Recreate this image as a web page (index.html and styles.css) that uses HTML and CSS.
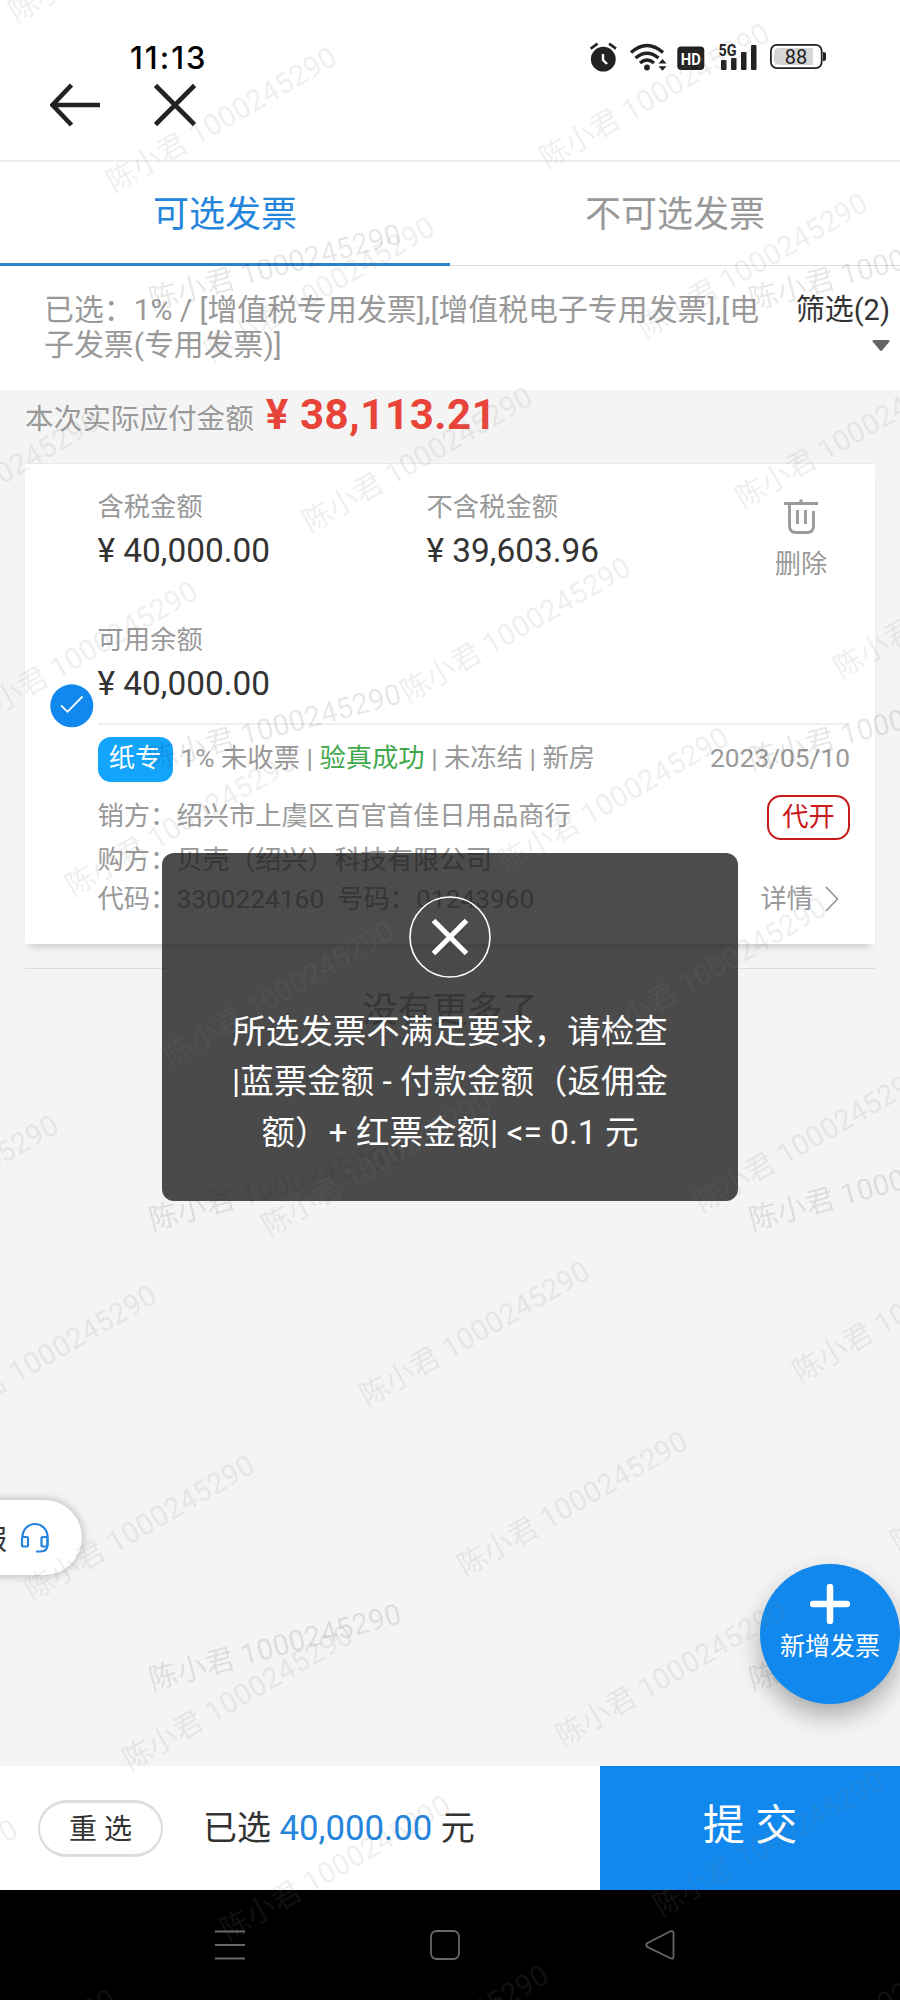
FILE: index.html
```html
<!DOCTYPE html>
<html lang="zh-CN">
<head>
<meta charset="utf-8">
<title>选择发票</title>
<link rel="stylesheet" href="styles.css">
</head>
<body>
<div class="screen">
  <header class="status">
    <span class="clock">11:13</span>
    <svg class="status-icons" width="240" height="40" viewBox="590 38 240 40">
      <g fill="#222" stroke="none">
        <circle cx="603.3" cy="59.2" r="12.4"/>
        <path d="M590.6 48.6l7-5M616 48.6l-7-5" stroke="#222" stroke-width="2.6"/>
        <path d="M603 54v6l4 4" fill="none" stroke="#fff" stroke-width="2.4"/>
        <path d="M631 52.500q16-14 32 0M635.500 58q11.500-9.500 23 0M640 63q7-6 14 0" fill="none" stroke="#222" stroke-width="3.300"/>
        <circle cx="647" cy="67.500" r="2.900"/>
        <path d="M658.500 63.500l4-4.500 4 4.500zM658.500 66.300l4 4.500 4-4.500z"/>
        <rect x="677.300" y="46.500" width="27" height="23.500" rx="4"/>
        <rect x="721" y="60" width="5.500" height="10" rx="1"/>
        <rect x="731" y="58" width="5.500" height="12" rx="1"/>
        <rect x="741" y="52" width="5.500" height="18" rx="1"/>
        <rect x="751" y="45" width="5.500" height="25" rx="1"/>
        <rect x="770.900" y="44.900" width="50.800" height="23.200" rx="6" fill="#fff" stroke="#222" stroke-width="1.800"/>
        <path d="M779 48h34v17h-34a5 5 0 0 1-5-5v-7a5 5 0 0 1 5-5z" fill="#d6d6d6"/>
        <path d="M823 52q3 0 3 2v5q0 2-3 2z"/>
      </g>
      <text class="ico-hd" x="690.800" y="64.500" textLength="20" lengthAdjust="spacingAndGlyphs">HD</text>
      <text class="ico-5g" x="727.500" y="56" textLength="18" lengthAdjust="spacingAndGlyphs">5G</text>
      <text class="ico-88" x="796" y="63.800">88</text>
    </svg>
  </header>
  <nav class="topnav">
    <svg width="50" height="44" viewBox="0 0 50 44"><path d="M21.500 2L2.500 22l19 20M2.500 22H50" fill="none" stroke="#222" stroke-width="4.600"/></svg>
    <svg width="42" height="44" viewBox="0 0 42 44"><path d="M1.500 2.500l39 39M40.500 2.500l-39 39" fill="none" stroke="#222" stroke-width="4.600"/></svg>
  </nav>
  <div class="tabs">
    <div class="tab tab-on">可选发票</div>
    <div class="tab">不可选发票</div>
  </div>
  <section class="filter">
    <p class="filter-text">已选：1% / [增值税专用发票],[增值税电子专用发票],[电子发票(专用发票)]</p>
    <div class="filter-btn">
      <span>筛选(2)</span>
      <svg width="18" height="12" viewBox="0 0 18 12"><path d="M1.500 1h15l-7.500 9z" fill="#666" stroke="#666" stroke-width="2" stroke-linejoin="round"/></svg>
    </div>
  </section>
  <main class="main">
    <div class="due"><span>本次实际应付金额</span><strong>¥ 38,113.21</strong></div>
    <article class="card">
      <div class="pick">
        <svg width="44" height="44" viewBox="0 0 44 44"><circle cx="21.800" cy="21.800" r="21.500" fill="#1088ee"/><path d="M11 21.300l6.500 6.500L32.500 12.500" fill="none" stroke="#fff" stroke-width="1.800"/></svg>
      </div>
      <div class="body">
        <div class="sums">
          <div class="sum"><span class="lbl">含税金额</span><span class="amt">¥ 40,000.00</span></div>
          <div class="sum"><span class="lbl">不含税金额</span><span class="amt">¥ 39,603.96</span></div>
          <div class="del">
            <svg width="34" height="35" viewBox="0 0 34 35" fill="none" stroke="#999"><path d="M0 4.500h34" stroke-width="3"/><path d="M17 0.500v3" stroke-width="3"/><path d="M5.500 5v22q0 6.500 6.500 6.500h11q6.500 0 6.500-6.500V12" stroke-width="2.800"/><path d="M13.500 11v14M21.500 11v14" stroke-width="2.800"/></svg>
            <span>删除</span>
          </div>
          <div class="sum"><span class="lbl">可用余额</span><span class="amt">¥ 40,000.00</span></div>
        </div>
        <div class="meta">
          <span class="kind">纸专</span>
          <span class="state">1% 未收票 | <b>验真成功</b> | 未冻结 | 新房</span>
          <time>2023/05/10</time>
        </div>
        <div class="info">
          <div class="rows">
            <div class="row"><span>销方：</span><span>绍兴市上虞区百官首佳日用品商行</span></div>
            <div class="row"><span>购方：</span><span>贝壳（绍兴）科技有限公司</span></div>
            <div class="row"><span>代码：</span><span>3300224160&nbsp; 号码：01243960</span></div>
          </div>
          <div class="side">
            <span class="tag">代开</span>
            <span class="more">详情<svg width="14" height="26" viewBox="0 0 14 26"><path d="M1 1l11.500 12L1 25" fill="none" stroke="#999" stroke-width="1.800"/></svg></span>
          </div>
        </div>
      </div>
    </article>
    <div class="end">没有更多了</div>
  </main>
  <footer class="bar">
    <button class="reset">重 选</button>
    <div class="total">已选 <em>40,000.00</em> 元</div>
    <button class="submit">提 交</button>
  </footer>
  <div class="sysnav">
    <svg width="30" height="30" viewBox="0 0 30 30"><path d="M0 1.500h30M0 15h30M0 28.500h30" stroke="#686868" stroke-width="2.200"/></svg>
    <svg width="30" height="30" viewBox="0 0 30 30"><rect x="1" y="1" width="28" height="28" rx="5.500" fill="none" stroke="#686868" stroke-width="1.800"/></svg>
    <svg width="30" height="30" viewBox="0 0 30 30"><path d="M25 1.500q3.500-1.500 3.500 2v23q0 3-3 1.700L2.500 17q-2.500-2 0-4z" fill="none" stroke="#686868" stroke-width="1.800"/></svg>
  </div>

  <svg class="marks marks-app" width="900" height="1766" viewBox="0 0 900 1766"></svg>

  <div class="service"><span>服</span>
    <svg width="30" height="32" viewBox="0 0 30 32" fill="none" stroke="#2585dc" stroke-width="2.200"><path d="M2.500 15v-.5a12.500 12.500 0 0 1 25 0v8q0 7-7 7H16"/><rect x="2" y="15" width="6" height="9.500" rx="1"/><rect x="21.500" y="15" width="6" height="9.500" rx="1"/></svg>
  </div>
  <div class="fab">
    <svg width="40" height="40" viewBox="0 0 40 40"><path d="M20 3v34M3 20h34" stroke="#fff" stroke-width="6.500" stroke-linecap="round"/></svg>
    <span>新增发票</span>
  </div>
  <div class="toast">
    <svg width="84" height="84" viewBox="0 0 84 84" fill="none" stroke="#fff"><circle cx="42" cy="42" r="40" stroke-width="1.600"/><path d="M25.500 25.500l33 33M58.500 25.500l-33 33" stroke-width="5.200"/></svg>
    <p>所选发票不满足要求，请检查<br>|蓝票金额 - 付款金额（返佣金<br>额）+ 红票金额| &lt;= 0.1 元</p>
  </div>
  <svg class="marks marks-system" width="900" height="2000" viewBox="0 0 900 2000"></svg>
</div>
<script src="watermark.js"></script>
</body>
</html>
```
FILE: styles.css
```css
* { box-sizing: border-box; }
body {
  margin: 0;
  background: #f4f4f4;
  font-family: Roboto, "Noto Sans CJK SC", sans-serif;
  font-weight: 400;
  color: #999;
}
p { margin: 0; }
svg { display: block; flex: none; }
button { font: inherit; padding: 0; border: 0; }
.screen {
  position: relative;
  width: 900px;
  height: 2000px;
  overflow: hidden;
  display: flex;
  flex-direction: column;
}

/* status bar and top navigation */
.status {
  height: 80px;
  flex: none;
  background: #fff;
  display: flex;
  justify-content: space-between;
  padding: 38px 70px 0 130px;
}
.clock { font: 500 31px/40px Inter, Roboto, sans-serif; letter-spacing: 2px; color: #000; white-space: nowrap; }
.status-icons text { text-anchor: middle; font-family: Roboto, sans-serif; }
.ico-hd { font-size: 17px; font-weight: 700; fill: #fff; }
.ico-5g { font-size: 16.5px; font-weight: 700; fill: #222; }
.ico-88 { font-size: 20px; font-weight: 400; fill: #222; }
.topnav {
  height: 82px;
  flex: none;
  background: #fff;
  border-bottom: 2px solid #eee;
  display: flex;
  gap: 54px;
  padding: 3px 0 0 50px;
}

/* tabs */
.tabs { height: 104px; flex: none; display: flex; background: #fff; }
.tab {
  flex: 1;
  border-bottom: 1px solid #ddd;
  font-size: 36px;
  line-height: 106px;
  text-align: center;
}
.tab-on { color: #2585dc; border-bottom: 3px solid #2b83cd; }

/* filter */
.filter {
  height: 124px;
  flex: none;
  background: #fff;
  display: flex;
  justify-content: space-between;
  padding: 27px 10px 0 44px;
  font-size: 29.9px;
  line-height: 34.5px;
}
.filter-text { width: 722px; word-break: break-all; }
.filter-btn {
  display: flex;
  flex-direction: column;
  align-items: flex-end;
  gap: 12px;
  color: #333;
  font-size: 29px;
  white-space: nowrap;
}

/* content */
.main { flex: 1; }
.due {
  height: 73px;
  display: flex;
  align-items: baseline;
  gap: 12px;
  padding: 0 0 0 25px;
  font-size: 28.6px;
  line-height: 50px;
  white-space: nowrap;
}
.due span { padding-top: 1px; }
.due strong { color: #e8443a; font-size: 42px; font-weight: 700; letter-spacing: .6px; }
.card {
  height: 481px;
  margin: 0 25px;
  background: #fff;
  border-top: 1px solid #eaeaea;
  box-shadow: 0 7px 8px -5px rgba(0, 0, 0, .2);
  display: flex;
  font-size: 26.3px;
  white-space: nowrap;
}
.pick { width: 72.500px; padding: 4px 0 0 25px; display: flex; align-items: center; }
.body { width: 752.500px; display: flex; flex-direction: column; }
.sums {
  height: 261px;
  border-bottom: 2px solid #eee;
  display: grid;
  grid-template-columns: 329px 313px 110px;
  grid-template-rows: 133px 1fr;
  padding-top: 25px;
}
.sum { display: flex; flex-direction: column; }
.lbl { line-height: 36px; }
.amt { color: #333; font-size: 33.4px; line-height: 40px; margin-top: 6px; }
.del { display: flex; flex-direction: column; align-items: center; padding-top: 10px; margin-left: 13px; }
.del span { line-height: 36px; margin-top: 12px; }
.meta { height: 68px; display: flex; padding-top: 12px; line-height: 42px; }
.kind {
  width: 75px;
  height: 45px;
  margin-right: 8px;
  border-radius: 13px;
  background: #12a5fb;
  color: #fff;
  text-align: center;
}
.state b { color: #3fa94c; font-weight: 400; }
.meta time { margin-left: auto; }
.info { flex: 1; display: flex; justify-content: space-between; }
.rows { padding-top: 3px; }
.row { display: flex; line-height: 40px; height: 44px; }
.row:last-child { margin-top: -5px; }
.side { display: flex; flex-direction: column; align-items: flex-end; padding-top: 2px; }
.tag {
  width: 83px;
  height: 45px;
  border: 2.500px solid #c91a1a;
  border-radius: 14px;
  color: #c91a1a;
  text-align: center;
  line-height: 41px;
}
.more { display: flex; align-items: center; gap: 12px; margin: 39px 11px 0 0; line-height: 40px; }
.end {
  margin: 24px 25px 0;
  border-top: 1px solid #ddd;
  padding-top: 21px;
  font-size: 35px;
  line-height: 42px;
  text-align: center;
}

/* bottom bar */
.bar { height: 124px; flex: none; background: #fff; display: flex; align-items: center; padding-left: 38px; }
.reset {
  width: 125px;
  height: 57px;
  border: solid #ddd;
  border-width: 3px 2px;
  border-radius: 29px;
  background: #fff;
  color: #333;
  font-size: 28px;
  line-height: 53px;
}
.total { margin-left: 40px; padding-bottom: 6px; color: #333; font-size: 34px; white-space: nowrap; }
.total em { color: #2585dc; font-style: normal; font-size: 34.800px; }
.submit {
  width: 300px;
  height: 124px;
  margin-left: auto;
  padding-bottom: 13px;
  background: #1088ee;
  color: #fff;
  font-size: 42px;
}
.sysnav { height: 110px; flex: none; background: #000; display: flex; gap: 185px; padding: 40px 0 0 215px; }

/* floating layers */
.marks { position: absolute; left: 0; top: 0; pointer-events: none; font-size: 29px; letter-spacing: .2px; }
.marks-app { fill: rgba(0, 0, 0, .11); }
.marks-system { fill: rgba(128, 128, 128, .14); }
.service {
  position: absolute;
  left: -70px;
  top: 1500px;
  width: 152px;
  height: 75px;
  border-radius: 38px;
  background: #fff;
  box-shadow: 0 0 10px rgba(0, 0, 0, .3);
  display: flex;
  align-items: center;
  justify-content: flex-end;
  gap: 13px;
  padding: 0 32px 0 0;
  font-size: 28px;
  color: #333;
}
.fab {
  position: absolute;
  left: 760px;
  top: 1564px;
  width: 140px;
  height: 140px;
  border-radius: 50%;
  background: #1088ee;
  box-shadow: 0 12px 24px rgba(0, 0, 0, .3);
  color: #fff;
  font-size: 25px;
  line-height: 34px;
  display: flex;
  flex-direction: column;
  align-items: center;
  gap: 6px;
  padding-top: 20px;
}
.toast {
  position: absolute;
  left: 162px;
  top: 853px;
  width: 576px;
  height: 348px;
  border-radius: 12px;
  background: rgba(25, 25, 25, .78);
  color: #fff;
  font-size: 33.5px;
  line-height: 50.4px;
  text-align: center;
  white-space: nowrap;
  display: flex;
  flex-direction: column;
  align-items: center;
  gap: 28px;
  padding-top: 42px;
}
```
FILE: watermark.js
```js
const NS = 'http://www.w3.org/2000/svg';
const LABEL = '陈小君 1000245290';

function mark(layer, x, y, angle) {
  const t = document.createElementNS(NS, 'text');
  t.setAttribute('transform', `translate(${x.toFixed(1)} ${y.toFixed(1)}) rotate(${angle})`);
  t.textContent = LABEL;
  layer.appendChild(t);
}

// App layer: upright 600 x 460 grid, text tilted 15 degrees
const app = document.querySelector('.marks-app');
for (let row = 0; row < 4; row++) {
  for (let col = 0; col < 2; col++) mark(app, 152 + col * 600, 310 + row * 460, -15);
}

// System layer: 387 x 196 grid turned by 30 degrees as a whole
const sys = document.querySelector('.marks-system');
for (let row = -3; row < 14; row++) {
  for (let col = -4; col < 5; col++) {
    const x = 114 + row * 98 + col * 335;
    const y = 193 + row * 170 - col * 194;
    if (x > -270 && x < 900 && y > 0 && y < 2150) mark(sys, x, y, -30);
  }
}
```
